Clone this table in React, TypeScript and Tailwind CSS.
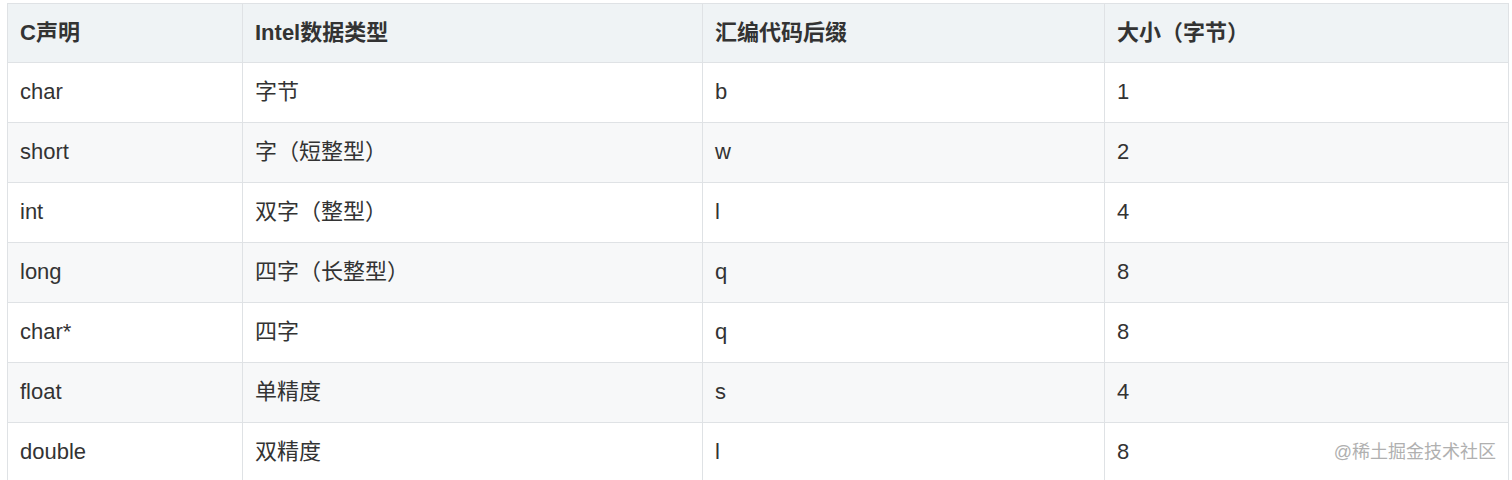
const headers = ['C声明', 'Intel数据类型', '汇编代码后缀', '大小（字节）']

const rows = [
  ['char', '字节', 'b', '1'],
  ['short', '字（短整型）', 'w', '2'],
  ['int', '双字（整型）', 'l', '4'],
  ['long', '四字（长整型）', 'q', '8'],
  ['char*', '四字', 'q', '8'],
  ['float', '单精度', 's', '4'],
  ['double', '双精度', 'l', '8'],
]

const colWidths = ['w-[235px]', 'w-[460px]', 'w-[402px]', 'w-[404px]']

export default function App() {
  return (
    <div className="relative h-[480px] overflow-hidden bg-white pl-[7px] pt-[3px] font-['Liberation_Sans','Noto_Sans_CJK_SC',sans-serif] text-[22px] text-[#333]">
      <table className="w-[1501px] table-fixed border-collapse">
        <colgroup>
          {colWidths.map((w) => (
            <col key={w} className={w} />
          ))}
        </colgroup>
        <thead>
          <tr className="h-[59px] bg-[#eff3f5]">
            {headers.map((h) => (
              <th key={h} className="border border-[#dfe2e5] px-[12px] pb-[2px] text-left font-bold">
                {h}
              </th>
            ))}
          </tr>
        </thead>
        <tbody>
          {rows.map((r, i) => (
            <tr key={i} className={`h-[60px] ${i % 2 === 1 ? 'bg-[#f7f8f9]' : 'bg-white'}`}>
              {r.map((c, j) => (
                <td key={j} className="border border-[#dfe2e5] px-[12px] pb-[2px]">
                  {c}
                </td>
              ))}
            </tr>
          ))}
        </tbody>
      </table>

      {/* watermark */}
      <div className="absolute right-[16px] top-[439px] text-[18px] text-[#b0b0b0]">@稀土掘金技术社区</div>
    </div>
  )
}
